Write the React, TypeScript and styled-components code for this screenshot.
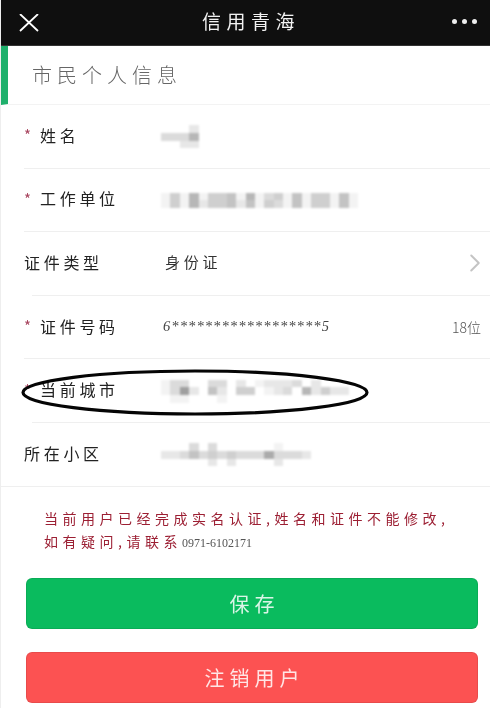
import React from 'react';
import styled, { createGlobalStyle } from 'styled-components';
import { ChevronRight } from 'lucide-react';

const GlobalStyle = createGlobalStyle`
  html, body {
    margin: 0;
    padding: 0;
    background: #fff;
  }
  * {
    box-sizing: border-box;
  }
`;

const Page = styled.div`
  width: 490px;
  height: 708px;
  overflow: hidden;
  display: flex;
  flex-direction: column;
  background: #fff;
  border-left: 1px solid #eee;
  font-family: 'Noto Sans CJK SC', 'Noto Sans', sans-serif;
  filter: blur(0.3px);
`;

const Header = styled.header`
  height: 46px;
  flex: none;
  display: flex;
  align-items: center;
  justify-content: space-between;
  padding: 0 13px 0 18px;
  background: #0f0f0f;
  border-bottom: 1px solid #333;
`;

const HeaderTitle = styled.h1`
  margin: 0 0 5px 11px;
  font-size: 19px;
  font-weight: 400;
  letter-spacing: 5.5px;
  color: #f2f2f2;
`;

const Dots = styled.div`
  display: flex;
  gap: 5px;
  margin-bottom: 3px;
`;

const Dot = styled.span`
  width: 5px;
  height: 5px;
  border-radius: 50%;
  background: #eee;
`;

const SectionHead = styled.div`
  height: 59px;
  flex: none;
  display: flex;
  align-items: center;
  padding: 0 0 2px 24px;
  border-left: 7px solid #1fb06c;
  border-bottom: 1px solid #f3f3f3;
  font-size: 20px;
  font-weight: 300;
  letter-spacing: 5px;
  color: #666;
`;

const Row = styled.div<{ $inset: number }>`
  position: relative;
  height: 63.6px;
  flex: none;
  display: grid;
  grid-template-columns: 137px 1fr auto;
  align-items: center;
  padding: 0 9px 0 23px;
  &::after {
    content: '';
    position: absolute;
    left: ${(p) => p.$inset}px;
    right: 0;
    bottom: 0;
    height: 1px;
    background: #efefef;
  }
`;

const Label = styled.div`
  display: flex;
  align-items: center;
  padding-bottom: 4px;
  font-size: 16px;
  letter-spacing: 3.7px;
  color: #222;
`;

const Star = styled.span`
  width: 16px;
  font-size: 15px;
  color: #a8455f;
`;

const Value = styled.div`
  font-size: 15px;
  letter-spacing: 3.8px;
  color: #333;
  padding: 0 0 4px 4px;
`;

const Masked = styled.div`
  font-family: 'Liberation Serif', serif;
  font-style: italic;
  font-size: 14.5px;
  letter-spacing: 1.1px;
  padding: 0 0 2px 2px;
  color: #444;
`;

const Side = styled.div`
  display: flex;
  align-items: center;
  padding-bottom: 2px;
  font-size: 14px;
  font-weight: 300;
  color: #555;
`;

const Chevron = styled(ChevronRight)`
  margin-right: -9px;
`;

const Mosaic = styled.div`
  display: flex;
  flex-direction: column;
  filter: blur(1.1px);
`;

const MosaicLine = styled.div`
  display: flex;
`;

const Cell = styled.span<{ $shade: number }>`
  width: 9.4px;
  height: 7.6px;
  background: rgb(${(p) => 255 - p.$shade * 12}, ${(p) => 255 - p.$shade * 12}, ${(p) => 255 - p.$shade * 12});
`;

const Circle = styled.svg`
  position: absolute;
  left: 19px;
  top: 9px;
  width: 350px;
  height: 49px;
  pointer-events: none;
`;

const Notice = styled.p`
  margin: 0;
  flex: none;
  height: 91px;
  padding: 20px 20px 0 43px;
  font-size: 14px;
  line-height: 23px;
  letter-spacing: 4.5px;
  white-space: nowrap;
  color: #9c1f33;
`;

const Phone = styled.span`
  font-family: 'Liberation Serif', serif;
  font-size: 12px;
  letter-spacing: 0;
  color: #555;
`;

const Actions = styled.div`
  display: flex;
  flex-direction: column;
  gap: 23px;
  padding: 0 12px 0 25px;
`;

const ActionButton = styled.button<{ $tone: string }>`
  height: 51px;
  border: 1px solid rgba(0, 0, 0, 0.08);
  border-radius: 6px;
  background: ${(p) => p.$tone};
  color: rgba(255, 255, 255, 0.85);
  font-family: inherit;
  font-size: 20px;
  letter-spacing: 5px;
  padding: 0 0 0 5px;
`;

const Redacted = ({ lines }: { lines: string[] }) => (
  <Mosaic>
    {lines.map((line, i) => (
      <MosaicLine key={i}>
        {line.split('').map((c, j) => (
          <Cell key={j} $shade={parseInt(c, 16)} />
        ))}
      </MosaicLine>
    ))}
  </Mosaic>
);

const App = () => (
  <>
    <GlobalStyle />
    <Page>
      <Header>
        <svg width="20" height="18" viewBox="0 0 20 18" fill="none" stroke="#fff" strokeWidth="1.8">
          <path d="M1 0 L19 17 M19 0 L1 17" />
        </svg>
        <HeaderTitle>信用青海</HeaderTitle>
        <Dots>
          <Dot />
          <Dot />
          <Dot />
        </Dots>
      </Header>
      <SectionHead>市民个人信息</SectionHead>

      <Row $inset={23}>
        <Label><Star>*</Star>姓名</Label>
        <Redacted lines={['00020', '33360', '00220']} />
        <span />
      </Row>
      <Row $inset={23}>
        <Label><Star>*</Star>工作单位</Label>
        <Redacted
          lines={['141614451613415144151', '141624452514315144151']}
        />
        <span />
      </Row>
      <Row $inset={31}>
        <Label>证件类型</Label>
        <Value>身份证</Value>
        <Side><Chevron size={30} color="#c4c4c4" strokeWidth={1.6} /></Side>
      </Row>
      <Row $inset={23}>
        <Label><Star>*</Star>证件号码</Label>
        <Masked>6******************5</Masked>
        <Side>18位</Side>
      </Row>
      <Row $inset={31}>
        <Label><Star>*</Star>当前城市</Label>
        <Redacted
          lines={['13300330201222302000', '13820520440123062422', '01100010000000000000']}
        />
        <span />
        <Circle viewBox="0 0 350 49" fill="none">
          <ellipse cx="175" cy="24.5" rx="172" ry="21.5" stroke="#050505" strokeWidth="3.2" />
        </Circle>
      </Row>
      <Row $inset={0}>
        <Label>所在小区</Label>
        <Redacted
          lines={['0003030000001000', '2235343433373332', '0000020200002000']}
        />
        <span />
      </Row>

      <Notice>
        当前用户已经完成实名认证,姓名和证件不能修改,
        <br />
        如有疑问,请联系<Phone>0971-6102171</Phone>
      </Notice>

      <Actions>
        <ActionButton $tone="#0abb5e">保存</ActionButton>
        <ActionButton $tone="#fc5252">注销用户</ActionButton>
      </Actions>
    </Page>
  </>
);

export default App;
